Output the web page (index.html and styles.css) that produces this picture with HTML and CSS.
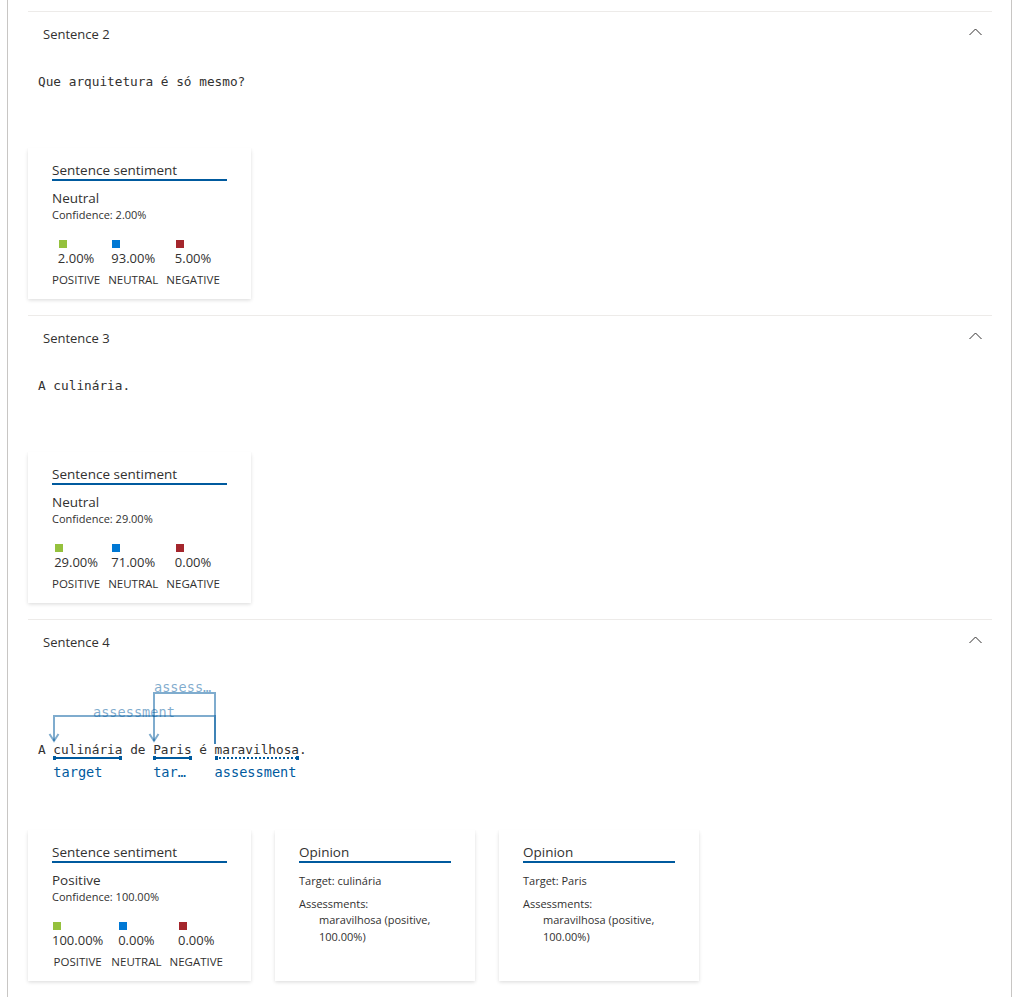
FILE: index.html
```html
<!DOCTYPE html>
<html lang="pt">
<head>
<meta charset="utf-8">
<title>Sentences</title>
<link rel="stylesheet" href="styles.css">
</head>
<body>
<div class="panel">
  <div class="card-row prev-row">
    <div class="card sentiment-card card-empty"></div>
    <div class="card opinion-card card-empty"></div>
    <div class="card opinion-card card-empty"></div>
    <div class="card opinion-card card-empty"></div>
  </div>

  <section class="sentence">
    <header class="sentence-header">
      <span class="sentence-title">Sentence 2</span>
      <svg class="chevron" width="13" height="8" viewBox="0 0 13 8"><polyline points="0.5,7 6.5,1 12.5,7" fill="none" stroke="#323130" stroke-width="1"/></svg>
    </header>
    <p class="sentence-text">Que arquitetura é só mesmo?</p>
    <div class="card-row">
      <div class="card sentiment-card">
        <div class="card-title">Sentence sentiment</div>
        <div class="sentiment-label">Neutral</div>
        <div class="confidence">Confidence: 2.00%</div>
        <div class="legend">
          <div class="legend-col"><div class="legend-value"><span class="swatch swatch-pos"></span><span class="pct">2.00%</span></div><div class="legend-name">POSITIVE</div></div>
          <div class="legend-col"><div class="legend-value"><span class="swatch swatch-neu"></span><span class="pct">93.00%</span></div><div class="legend-name">NEUTRAL</div></div>
          <div class="legend-col"><div class="legend-value"><span class="swatch swatch-neg"></span><span class="pct">5.00%</span></div><div class="legend-name">NEGATIVE</div></div>
        </div>
      </div>
    </div>
  </section>

  <section class="sentence">
    <header class="sentence-header">
      <span class="sentence-title">Sentence 3</span>
      <svg class="chevron" width="13" height="8" viewBox="0 0 13 8"><polyline points="0.5,7 6.5,1 12.5,7" fill="none" stroke="#323130" stroke-width="1"/></svg>
    </header>
    <p class="sentence-text">A culinária.</p>
    <div class="card-row">
      <div class="card sentiment-card">
        <div class="card-title">Sentence sentiment</div>
        <div class="sentiment-label">Neutral</div>
        <div class="confidence">Confidence: 29.00%</div>
        <div class="legend">
          <div class="legend-col"><div class="legend-value"><span class="swatch swatch-pos"></span><span class="pct">29.00%</span></div><div class="legend-name">POSITIVE</div></div>
          <div class="legend-col"><div class="legend-value"><span class="swatch swatch-neu"></span><span class="pct">71.00%</span></div><div class="legend-name">NEUTRAL</div></div>
          <div class="legend-col"><div class="legend-value"><span class="swatch swatch-neg"></span><span class="pct">0.00%</span></div><div class="legend-name">NEGATIVE</div></div>
        </div>
      </div>
    </div>
  </section>

  <section class="sentence">
    <header class="sentence-header">
      <span class="sentence-title">Sentence 4</span>
      <svg class="chevron" width="13" height="8" viewBox="0 0 13 8"><polyline points="0.5,7 6.5,1 12.5,7" fill="none" stroke="#323130" stroke-width="1"/></svg>
    </header>
    <div class="diagram">
      <svg class="arcs" width="300" height="100" viewBox="0 0 300 100">
        <g fill="none" stroke="#005a9e" stroke-opacity="0.5" stroke-width="2">
          <path d="M187 92 V64 H26 V89"/>
          <path d="M21.5 82 L26 89 L30.5 82"/>
          <path d="M187 92 V41 H126 V89"/>
          <path d="M121.5 82 L126 89 L130.5 82"/>
        </g>
      </svg>
      <span class="arc-label arc-label-1">assessment</span>
      <span class="arc-label arc-label-2">assess…</span>
      <div class="tokens">
        <span class="plain">A </span>
        <span class="token"><span class="word">culinária</span><span class="mark"></span><span class="tag">target</span></span>
        <span class="plain"> de </span>
        <span class="token"><span class="word">Paris</span><span class="mark"></span><span class="tag">tar…</span></span>
        <span class="plain"> é </span>
        <span class="token"><span class="word">maravilhosa</span><span class="mark mark-dotted"></span><span class="tag">assessment</span></span>
        <span class="plain">.</span>
      </div>
    </div>
    <div class="card-row card-row-diagram">
      <div class="card sentiment-card">
        <div class="card-title">Sentence sentiment</div>
        <div class="sentiment-label">Positive</div>
        <div class="confidence">Confidence: 100.00%</div>
        <div class="legend">
          <div class="legend-col"><div class="legend-value"><span class="swatch swatch-pos"></span><span class="pct">100.00%</span></div><div class="legend-name">POSITIVE</div></div>
          <div class="legend-col"><div class="legend-value"><span class="swatch swatch-neu"></span><span class="pct">0.00%</span></div><div class="legend-name">NEUTRAL</div></div>
          <div class="legend-col"><div class="legend-value"><span class="swatch swatch-neg"></span><span class="pct">0.00%</span></div><div class="legend-name">NEGATIVE</div></div>
        </div>
      </div>
      <div class="card opinion-card">
        <div class="card-title">Opinion</div>
        <div class="op-target">Target: culinária</div>
        <div class="op-assess">Assessments:</div>
        <div class="op-item">maravilhosa (positive, 100.00%)</div>
      </div>
      <div class="card opinion-card">
        <div class="card-title">Opinion</div>
        <div class="op-target">Target: Paris</div>
        <div class="op-assess">Assessments:</div>
        <div class="op-item">maravilhosa (positive, 100.00%)</div>
      </div>
    </div>
  </section>
</div>
</body>
</html>
```

FILE: styles.css
```css
html, body {
  margin: 0;
  padding: 0;
  background: #ffffff;
}

body {
  font-family: "Open Sans", "Noto Sans", sans-serif;
  color: #323130;
  overflow: hidden;
}

.panel {
  box-sizing: border-box;
  width: 1005px;
  margin-left: 7px;
  min-height: 1100px;
  border-left: 1px solid #c8c6c4;
  border-right: 1px solid #c8c6c4;
  padding: 0 19px 0 20px;
}

.card-row {
  display: flex;
  gap: 24px;
  align-items: flex-start;
  margin-top: 56px;
}

.prev-row {
  margin-top: -156px;
  margin-bottom: 16px;
}

.card {
  box-sizing: border-box;
  height: 151px;
  background: #ffffff;
  padding: 13px 24px 11px;
  box-shadow: 0 1.6px 3.6px 0 rgba(0, 0, 0, 0.132), 0 0.3px 0.9px 0 rgba(0, 0, 0, 0.108);
}

.sentiment-card {
  width: 223px;
}

.opinion-card {
  width: 200px;
}

.sentence {
  border-top: 1px solid #edebe9;
  padding-bottom: 16px;
}

.sentence-header {
  display: flex;
  justify-content: space-between;
  align-items: flex-start;
  padding: 12px 10px 0 15px;
}

.sentence-title {
  font-size: 13px;
  line-height: 20px;
}

.chevron {
  display: block;
  margin-top: 4px;
}

.sentence-text {
  margin: 28px 0 0 10px;
  font-family: "DejaVu Sans Mono", "Liberation Mono", monospace;
  font-size: 12.75px;
  line-height: 20px;
  white-space: pre;
  color: #323130;
}

.card-title {
  font-size: 13.5px;
  line-height: 18px;
  border-bottom: 2px solid #005a9e;
}

.sentiment-label {
  margin-top: 8px;
  font-size: 13.5px;
  line-height: 18px;
}

.confidence {
  font-size: 11px;
  line-height: 16px;
}

.legend {
  display: flex;
  gap: 8px;
  margin-top: 17px;
}

.legend-col {
  display: flex;
  flex-direction: column;
  align-items: center;
}

.legend-value {
  display: flex;
  flex-direction: column;
  align-items: flex-start;
}

.swatch {
  display: block;
  width: 8px;
  height: 8px;
  margin-left: 1px;
}

.swatch-pos { background: #95c13d; }
.swatch-neu { background: #0078d4; }
.swatch-neg { background: #a4262c; }

.pct {
  margin-top: 1px;
  font-size: 13px;
  line-height: 18px;
}

.legend-name {
  margin-top: 5px;
  font-size: 11.5px;
  line-height: 16px;
  white-space: nowrap;
}

.op-target {
  margin-top: 10px;
  font-size: 11px;
  line-height: 16px;
}

.op-assess {
  margin-top: 7px;
  font-size: 11px;
  line-height: 16px;
}

.op-item {
  padding-left: 20px;
  font-size: 11px;
  line-height: 16.5px;
}

/* dependency diagram */
.diagram {
  position: relative;
  padding: 90px 0 0 10px;
}

.arcs {
  position: absolute;
  left: 0;
  top: 0;
}

.arc-label {
  position: absolute;
  font-family: "DejaVu Sans Mono", "Liberation Mono", monospace;
  font-size: 13.6px;
  line-height: 16px;
  color: rgba(0, 90, 158, 0.5);
  white-space: pre;
}

.arc-label-1 {
  left: 65px;
  top: 52px;
}

.arc-label-2 {
  left: 126px;
  top: 27px;
}

.tokens {
  display: flex;
  align-items: flex-start;
  font-family: "DejaVu Sans Mono", "Liberation Mono", monospace;
  font-size: 12.75px;
  line-height: 16px;
  color: #323130;
}

.plain {
  white-space: pre;
}

.token {
  display: flex;
  flex-direction: column;
}

.word {
  white-space: pre;
}

.mark {
  position: relative;
  height: 2px;
  margin-top: -1px;
  background: #005a9e;
}

.mark::before,
.mark::after {
  content: "";
  position: absolute;
  top: -1px;
  width: 3px;
  height: 4px;
  background: #005a9e;
}

.mark::before { left: 0; }
.mark::after { right: 0; }

.mark-dotted {
  background: repeating-linear-gradient(to right, #005a9e 0 2px, transparent 2px 4px);
}

.tag {
  margin-top: 4px;
  font-size: 13.6px;
  line-height: 18px;
  color: #005a9e;
  white-space: pre;
}

.card-row-diagram {
  margin-top: 49px;
}
```
